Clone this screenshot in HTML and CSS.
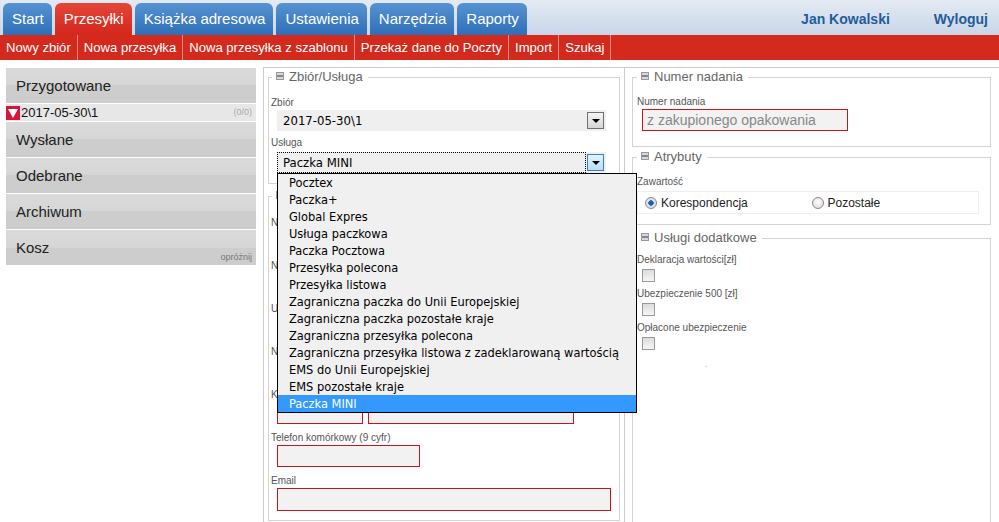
FILE: index.html
```html
<!DOCTYPE html>
<html lang="pl">
<head>
  <meta charset="UTF-8">
  <title>Nadawanie przesyłek</title>
  <link rel="stylesheet" href="styles.css">
</head>
<body>

  <div class="topbar">
    <ul class="tabs">
      <li class="tab">Start</li>
      <li class="tab active">Przesyłki</li>
      <li class="tab">Książka adresowa</li>
      <li class="tab">Ustawienia</li>
      <li class="tab">Narzędzia</li>
      <li class="tab">Raporty</li>
    </ul>
    <div class="user">
      <a class="user-name">Jan Kowalski</a>
      <a class="logout">Wyloguj</a>
    </div>
  </div>

  <ul class="subnav">
    <li>Nowy zbiór</li>
    <li>Nowa przesyłka</li>
    <li>Nowa przesyłka z szablonu</li>
    <li>Przekaż dane do Poczty</li>
    <li>Import</li>
    <li>Szukaj</li>
  </ul>

  <div class="main">

    <div class="sidebar">
      <div class="side-item">Przygotowane</div>
      <div class="side-sub"><span class="sub-icon"></span>2017-05-30\1<span class="count">(0/0)</span></div>
      <div class="side-item">Wysłane</div>
      <div class="side-item">Odebrane</div>
      <div class="side-item">Archiwum</div>
      <div class="side-item">Kosz<span class="empty-bin">opróżnij</span></div>
    </div>

    <div class="panel middle">
      <fieldset class="box service">
        <legend><span class="toggle"></span>Zbiór/Usługa</legend>
        <div class="label">Zbiór</div>
        <div class="select">
          <span class="select-value">2017-05-30\1</span>
          <span class="arrow"></span>
        </div>
        <div class="label">Usługa</div>
        <div class="select open">
          <span class="select-value focus">Paczka MINI</span>
          <span class="arrow"></span>
          <ul class="dropdown">
            <li>Pocztex</li>
            <li>Paczka+</li>
            <li>Global Expres</li>
            <li>Usługa paczkowa</li>
            <li>Paczka Pocztowa</li>
            <li>Przesyłka polecona</li>
            <li>Przesyłka listowa</li>
            <li>Zagraniczna paczka do Unii Europejskiej</li>
            <li>Zagraniczna paczka pozostałe kraje</li>
            <li>Zagraniczna przesyłka polecona</li>
            <li>Zagraniczna przesyłka listowa z zadeklarowaną wartością</li>
            <li>EMS do Unii Europejskiej</li>
            <li>EMS pozostałe kraje</li>
            <li class="selected">Paczka MINI</li>
          </ul>
        </div>
      </fieldset>

      <fieldset class="box address">
        <legend><span class="toggle"></span>Adresat</legend>
        <div class="row">
          <div class="label">Nazwa</div>
          <div class="input wide"></div>
        </div>
        <div class="row">
          <div class="label">Nazwa cd.</div>
          <div class="input wide"></div>
        </div>
        <div class="row">
          <div class="label">Ulica</div>
          <div class="input wide"></div>
        </div>
        <div class="row">
          <div class="label">Numer domu / lokalu</div>
          <div class="input wide"></div>
        </div>
        <div class="row">
          <div class="label">Kod pocztowy / Miejscowość</div>
          <div class="inputs">
            <div class="input zip"></div>
            <div class="input city"></div>
          </div>
        </div>
        <div class="row">
          <div class="label">Telefon komórkowy (9 cyfr)</div>
          <div class="input phone"></div>
        </div>
        <div class="row">
          <div class="label">Email</div>
          <div class="input email"></div>
        </div>
      </fieldset>
    </div>

    <div class="panel right">
      <fieldset class="box numbering">
        <legend><span class="toggle"></span>Numer nadania</legend>
        <div class="label">Numer nadania</div>
        <div class="input number">z zakupionego opakowania</div>
      </fieldset>

      <fieldset class="box attrs">
        <legend><span class="toggle"></span>Atrybuty</legend>
        <div class="label">Zawartość</div>
        <div class="radios">
          <label class="radio-opt"><span class="radio checked"></span>Korespondencja</label>
          <label class="radio-opt"><span class="radio"></span>Pozostałe</label>
        </div>
      </fieldset>

      <fieldset class="box extras">
        <legend><span class="toggle"></span>Usługi dodatkowe</legend>
        <div class="label">Deklaracja wartości[zł]</div>
        <span class="check"></span>
        <div class="label">Ubezpieczenie 500 [zł]</div>
        <span class="check"></span>
        <div class="label">Opłacone ubezpieczenie</div>
        <span class="check"></span>
        <div class="dot">.</div>
      </fieldset>
    </div>

  </div>

</body>
</html>
```

FILE: styles.css
```css
body {
  margin: 0;
  font-family: "Liberation Sans", Arial, sans-serif;
  background: #fff;
  color: #333;
  overflow: hidden;
}

ul {
  list-style: none;
  margin: 0;
  padding: 0;
}

/* top tabs */
.topbar {
  height: 35px;
  display: flex;
  justify-content: space-between;
  align-items: flex-end;
  background: linear-gradient(#e4eaf3, #c9d6e8);
}

.tabs {
  display: flex;
  gap: 3px;
  padding-left: 3px;
}

.tab {
  height: 32px;
  line-height: 31px;
  padding: 0 8px 0 9px;
  font-size: 15px;
  color: #fff;
  border-radius: 6px 6px 0 0;
  background: linear-gradient(#5693d3, #2f6fb7);
}

.tab.active {
  background: linear-gradient(#e5463a, #d4271c);
}

.user {
  align-self: center;
  display: flex;
  gap: 44px;
  margin-right: 11px;
  padding-top: 2px;
  font-size: 14px;
  font-weight: bold;
  color: #1f5c9c;
}

/* red sub menu */
.subnav {
  display: flex;
  height: 25px;
  background: #d42a1e;
}

.subnav li {
  line-height: 25px;
  padding: 0 6px;
  font-size: 13.1px;
  color: #fff;
  border-right: 1px solid #ee8a80;
}

/* page body */
.main {
  display: flex;
  align-items: flex-start;
  padding-top: 7px;
}

.sidebar {
  flex: none;
  width: 250px;
  margin: 1px 0 0 6px;
}

.side-item {
  position: relative;
  height: 35px;
  line-height: 35px;
  padding-left: 10px;
  font-size: 15px;
  color: #222;
  border-bottom: 1px solid #fff;
  background: linear-gradient(#dadada 0%, #d6d6d6 50%, #cdcdcd 50%, #cdcdcd 100%);
}

.side-sub {
  position: relative;
  height: 17px;
  line-height: 17px;
  font-size: 13px;
  color: #111;
  background: #e7e7e7;
  border-bottom: 1px solid #fff;
  display: flex;
  align-items: center;
}

.sub-icon {
  width: 14px;
  height: 14px;
  margin-right: 1px;
  background: #d9143a;
  position: relative;
}

.sub-icon::after {
  content: "";
  position: absolute;
  left: 2px;
  top: 3px;
  border-left: 5px solid transparent;
  border-right: 5px solid transparent;
  border-top: 9px solid #fff;
}

.count {
  position: absolute;
  right: 4px;
  top: 0;
  font-size: 9px;
  color: #aaa;
}

.empty-bin {
  position: absolute;
  right: 4px;
  bottom: 2px;
  line-height: 12px;
  font-size: 9px;
  color: #777;
}

.panel {
  box-sizing: border-box;
  border: 1px solid #ccc;
  padding: 1px 4px 0 4px;
  height: 470px;
}

.middle {
  flex: none;
  width: 362px;
  margin-left: 7px;
}

.right {
  flex: 1;
  min-width: 0;
  padding: 1px 8px 0 7px;
  border-left: none;
  border-right: none;
}

/* fieldsets */
.box {
  margin: 0;
  padding: 0 2px 9px 4px;
  border: 1px solid #d4d4d4;
  min-width: 0;
}

.middle .box {
  padding-left: 2px;
}

.box legend {
  margin-left: 0;
  padding: 0 5px 0 4px;
  font-size: 13px;
  line-height: 16px;
  color: #666;
}

.middle .box legend {
  margin-left: 1px;
}

.toggle {
  display: inline-block;
  width: 6px;
  height: 6px;
  margin-right: 5px;
  vertical-align: 1px;
  border: 1px solid #999;
  background: linear-gradient(#d8d8d8 0%, #d8d8d8 40%, #888 40%, #888 60%, #d8d8d8 60%);
}

.label {
  font-size: 10px;
  line-height: 12px;
  color: #555;
  margin-top: 11px;
  white-space: nowrap;
}

.service .label {
  margin-top: 12px;
}

.service .select + .label {
  margin-top: 6px;
}

.service {
  padding-bottom: 10px;
}

/* select boxes */
.select {
  position: relative;
  display: flex;
  align-items: center;
  height: 21px;
  width: 329px;
  margin: 1px 0 0 6px;
  background: #efefef;
  font-family: "DejaVu Sans Condensed", "DejaVu Sans", sans-serif;
  font-size: 13px;
  color: #000;
}

.select-value {
  flex: 1;
  padding-left: 5px;
  line-height: 19px;
  border: 1px solid transparent;
}

.select-value.focus {
  border: 1px dotted #000;
  margin-right: 1px;
}

.label + .select.open {
  margin-top: 3px;
}

.arrow {
  width: 15px;
  height: 15px;
  margin-right: 2px;
  border: 1px solid #707070;
  background: linear-gradient(#f4f4f4, #d6d6d6);
  position: relative;
}

.arrow::after {
  content: "";
  position: absolute;
  left: 4px;
  top: 6px;
  border-left: 4px solid transparent;
  border-right: 4px solid transparent;
  border-top: 4px solid #000;
}

.open .arrow {
  border-color: #3c7fb1;
  background: linear-gradient(#e3f3fd, #b6def8);
}

.dropdown {
  position: absolute;
  z-index: 5;
  left: 0;
  top: 21px;
  width: 358px;
  border: 1px solid #000;
  background: #f0f0f0;
}

.dropdown li {
  height: 17px;
  line-height: 17px;
  padding-left: 11px;
  white-space: nowrap;
  font-size: 12.7px;
}

.dropdown li.selected {
  background: #3399ff;
  color: #fff;
}

/* text inputs */
.input {
  box-sizing: border-box;
  height: 22px;
  margin: 1px 0 0 6px;
  border: 1px solid #c8151b;
  background: #f2f2f2;
}

.address {
  margin-top: 4px;
}

.address .label {
  margin-top: 8px;
}

.address .row:first-of-type .label {
  margin-top: 13px;
}

.wide {
  width: 296px;
}

.inputs {
  display: flex;
  gap: 5px;
}

.zip {
  width: 86px;
}

.inputs .city {
  margin-left: 0;
  width: 206px;
}

.phone {
  width: 143px;
}

.email {
  width: 334px;
  height: 23px;
}

.numbering {
  padding-bottom: 15px;
}

.number {
  width: 206px;
  margin-left: 5px;
  padding-left: 4px;
  line-height: 20px;
  font-size: 14px;
  color: #888;
}

.attrs {
  margin-top: 2px;
  padding-bottom: 10px;
}

.radios {
  display: flex;
  margin: 3px 9px 0 0;
  height: 21px;
  border: 1px solid #eee;
  font-size: 12px;
  color: #222;
}

.radio-opt {
  display: flex;
  align-items: center;
  width: 170px;
  padding-left: 7px;
}

.radio-opt + .radio-opt {
  padding-left: 0;
}

.radio {
  box-sizing: border-box;
  width: 12px;
  height: 12px;
  margin-right: 4px;
  border-radius: 50%;
  border: 1px solid #8a8a8a;
  background: radial-gradient(circle at 50% 40%, #fff, #d6d6d6);
}

.radio.checked {
  background: radial-gradient(circle, #1e4f8a 0, #2f6eb5 2.5px, #dfe9f4 3px, #c6cfd8 100%);
}

.extras {
  margin-top: 5px;
  height: 300px;
}

.extras .label {
  margin-top: 6px;
}

.extras .label:first-of-type {
  margin-top: 8px;
}

.check {
  display: block;
  box-sizing: border-box;
  width: 13px;
  height: 13px;
  margin: 3px 0 0 5px;
  border: 1px solid #999;
  background: linear-gradient(#dcdcdc, #f6f6f6);
}

.dot {
  margin: 8px 0 0 68px;
  font-size: 10px;
  color: #bbb;
}
```
